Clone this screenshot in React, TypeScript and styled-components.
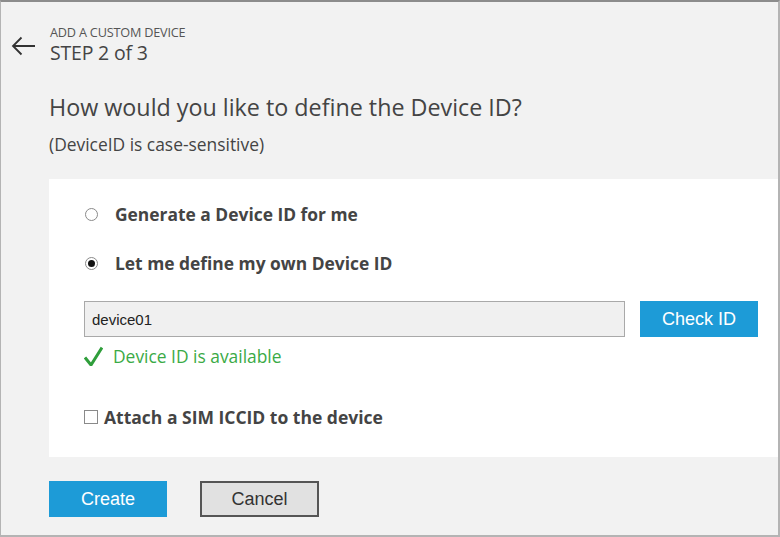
import React from "react";
import styled, { createGlobalStyle } from "styled-components";

const Global = createGlobalStyle`
  html, body { margin: 0; padding: 0; background: #f2f2f2; }
  * { box-sizing: border-box; }
`;

const Frame = styled.div`
  width: 780px;
  height: 537px;
  background: #f2f2f2;
  border-top: 2px solid #8c8c8c;
  border-left: 1px solid #b4b4b4;
  border-right: 2px solid #b4b4b4;
  border-bottom: 2px solid #b4b4b4;
  display: flex;
  flex-direction: column;
  font-family: "Open Sans", "Noto Sans", sans-serif;
  color: #4a4a4a;
  overflow: hidden;
`;

const Header = styled.div`
  display: flex;
  align-items: flex-start;
  padding: 22px 0 0 10px;
`;

const BackButton = styled.div`
  width: 39px;
  padding-top: 12px;
  display: flex;
`;

const TitleBlock = styled.div`
  display: flex;
  flex-direction: column;
`;

const Eyebrow = styled.div`
  font-size: 12.7px;
  line-height: 17px;
  color: #555;
  letter-spacing: -0.2px;
`;

const Step = styled.div`
  font-size: 19.5px;
  line-height: 24px;
  color: #444;
  letter-spacing: -0.2px;
`;

const Content = styled.div`
  padding-left: 48px;
  display: flex;
  flex-direction: column;
`;

const Heading = styled.h1`
  margin: 27px 0 0;
  font-weight: 400;
  font-size: 23.3px;
  line-height: 30px;
  color: #444;
`;

const Sub = styled.p`
  margin: 11px 0 0;
  font-size: 17.4px;
  line-height: 22px;
  color: #444;
`;

const Panel = styled.div`
  margin-top: 24px;
  background: #fff;
  height: 278px;
  padding: 23px 20px 0 35px;
  display: flex;
  flex-direction: column;
`;

const OptionRow = styled.label<{ $gap?: number }>`
  display: flex;
  align-items: center;
  gap: 17px;
  margin-top: ${(p) => p.$gap ?? 0}px;
  padding-left: 1px;
  height: 24px;
  font-weight: 700;
  font-size: 17.4px;
  color: #444;
`;

const Radio = styled.span<{ $checked?: boolean }>`
  width: 13px;
  height: 13px;
  border-radius: 50%;
  border: 1px solid #8a8a8a;
  background: #fff;
  display: flex;
  align-items: center;
  justify-content: center;
  &::after {
    content: "";
    width: 7px;
    height: 7px;
    border-radius: 50%;
    background: ${(p) => (p.$checked ? "#111" : "transparent")};
  }
`;

const IdRow = styled.div`
  display: flex;
  align-items: center;
  gap: 15px;
  margin-top: 26px;
`;

const TextInput = styled.input`
  width: 541px;
  height: 36px;
  border: 1px solid #a9a9a9;
  background: #f0f0f0;
  padding: 0 7px;
  font-family: "Liberation Sans", Arial, sans-serif;
  font-size: 15px;
  color: #222;
  outline: none;
`;

const BlueButton = styled.button<{ $w: number }>`
  width: ${(p) => p.$w}px;
  height: 36px;
  border: none;
  background: #1d9bd7;
  color: #fff;
  font-family: "Liberation Sans", Arial, sans-serif;
  font-size: 18px;
  padding: 0;
`;

const GrayButton = styled.button`
  width: 119px;
  height: 36px;
  border: 2px solid #555;
  background: #e1e1e1;
  color: #333;
  font-family: "Liberation Sans", Arial, sans-serif;
  font-size: 18px;
  padding: 0;
`;

const Status = styled.div`
  display: flex;
  align-items: center;
  gap: 10px;
  margin-top: 7px;
  font-size: 17.4px;
  color: #3aaa46;
  height: 24px;
`;

const CheckRow = styled.label`
  display: flex;
  align-items: center;
  gap: 6px;
  margin-top: 37px;
  font-weight: 700;
  font-size: 17.5px;
  color: #444;
  height: 24px;
`;

const Box = styled.span`
  width: 14px;
  height: 14px;
  border: 1px solid #8a8a8a;
  background: #fff;
`;

const Footer = styled.div`
  display: flex;
  gap: 33px;
  padding: 24px 0 0 48px;
`;

export default function App() {
  return (
    <>
      <Global />
      <Frame>
        <Header>
          <BackButton>
            <svg width="24" height="20" viewBox="0 0 24 20">
              <path d="M2 10 H24 M10.5 1.5 L2 10 L10.5 18.5" stroke="#333" strokeWidth="1.8" fill="none" />
            </svg>
          </BackButton>
          <TitleBlock>
            <Eyebrow>ADD A CUSTOM DEVICE</Eyebrow>
            <Step>STEP 2 of 3</Step>
          </TitleBlock>
        </Header>
        <Content>
          <Heading>How would you like to define the Device ID?</Heading>
          <Sub>(DeviceID is case-sensitive)</Sub>
          <Panel>
            <OptionRow>
              <Radio />
              Generate a Device ID for me
            </OptionRow>
            <OptionRow $gap={25}>
              <Radio $checked />
              Let me define my own Device ID
            </OptionRow>
            <IdRow>
              <TextInput defaultValue="device01" />
              <BlueButton $w={118}>Check ID</BlueButton>
            </IdRow>
            <Status>
              <svg width="19" height="20" viewBox="0 0 19 20">
                <path d="M1 11.5 L7 19 L18 1.5" stroke="#2f9e3b" strokeWidth="3" fill="none" strokeLinejoin="miter" />
              </svg>
              Device ID is available
            </Status>
            <CheckRow>
              <Box />
              Attach a SIM ICCID to the device
            </CheckRow>
          </Panel>
        </Content>
        <Footer>
          <BlueButton $w={118}>Create</BlueButton>
          <GrayButton>Cancel</GrayButton>
        </Footer>
      </Frame>
    </>
  );
}
